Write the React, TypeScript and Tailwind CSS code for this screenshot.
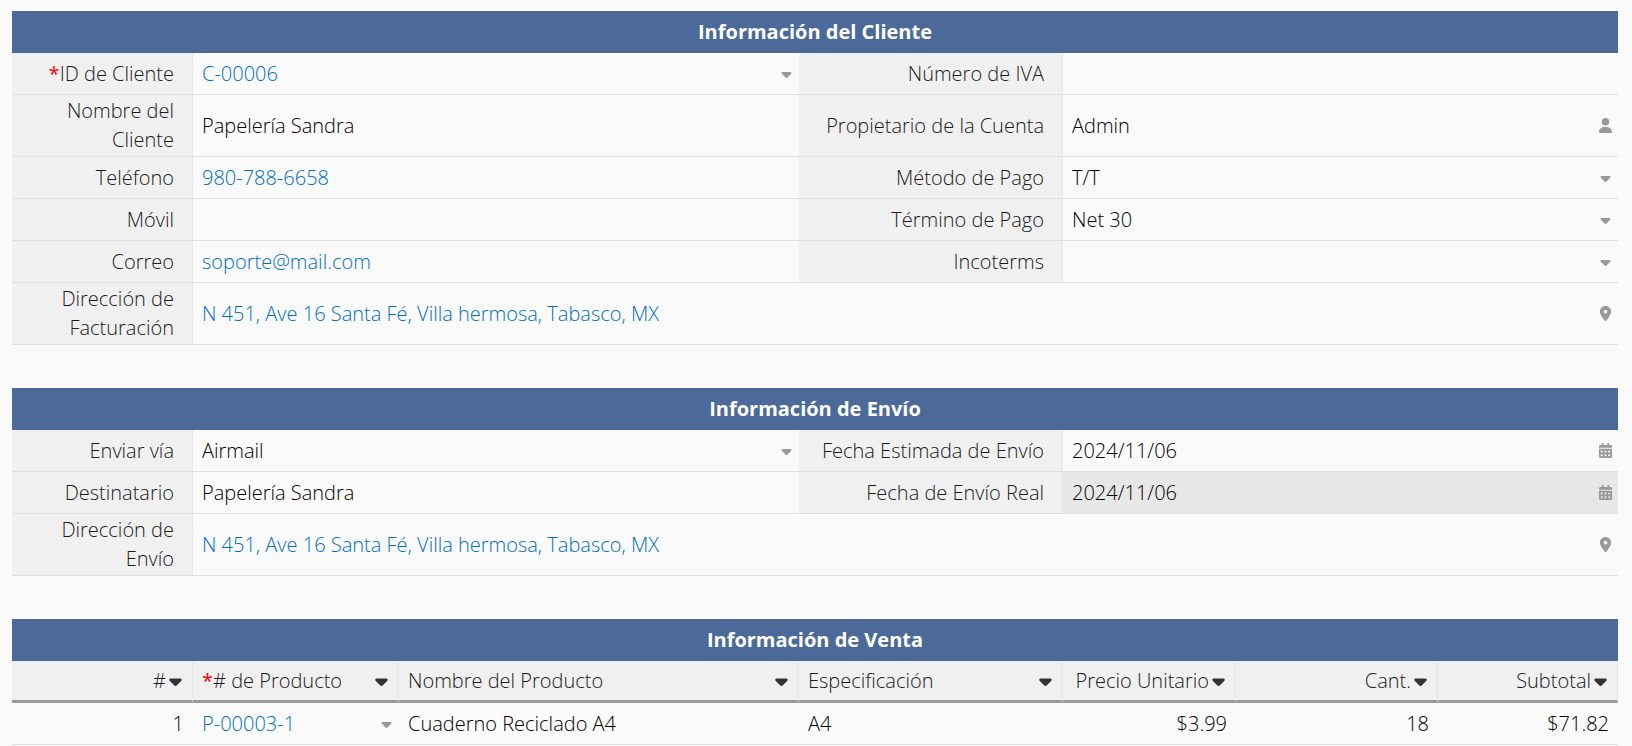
import type { ReactNode } from "react";
import { FaCalendarDays, FaCaretDown, FaLocationDot, FaUser } from "react-icons/fa6";

const ADDRESS = "N 451, Ave 16 Santa Fé, Villa hermosa, Tabasco, MX";

const controlClass = "h-full w-full min-w-0 appearance-none bg-transparent pl-[9px] pr-7 outline-none";

function SectionTitle({ children }: { children: ReactNode }) {
  return (
    <h2 className="flex h-[42px] items-center justify-center bg-[#4b6a99] pb-[2px] font-bold text-white">{children}</h2>
  );
}

function Row({ children, wide = false }: { children: ReactNode; wide?: boolean }) {
  return (
    <div
      className={`grid border-b border-[#dfdfdf] ${
        wide ? "grid-cols-[181fr_1425fr]" : "grid-cols-[181fr_606fr_264fr_555fr]"
      }`}
    >
      {children}
    </div>
  );
}

function Label({ id, required, children }: { id: string; required?: boolean; children: ReactNode }) {
  return (
    <label
      htmlFor={id}
      className="flex min-h-[41px] items-center justify-end border-r border-[#e7e7e7] bg-[#f0f0f0] pt-px pr-[18px] pb-[2px] pl-4 text-right text-[#1a1a1a]"
    >
      <span>
        {required && <span className="font-normal text-[#f00]">*</span>}
        {children}
      </span>
    </label>
  );
}

function TextField({ id, value = "" }: { id: string; value?: string }) {
  return <input id={id} type="text" defaultValue={value} className={controlClass} />;
}

function SelectField({ id, value = "", link, label }: { id: string; value?: string; link?: boolean; label?: string }) {
  return (
    <div className="relative h-full">
      <select id={id} aria-label={label} className={`${controlClass} ${link ? "text-[#006fc4]" : ""}`}>
        <option>{value}</option>
      </select>
      <span className="pointer-events-none absolute inset-y-0 right-[5px] flex w-[15px] items-center justify-center text-[#999]">
        <FaCaretDown size={16} />
      </span>
    </div>
  );
}

function LinkField({ id, href, children }: { id: string; href: string; children: ReactNode }) {
  return (
    <div className="flex items-center pl-[9px]">
      <a id={id} href={href} className="text-[#006fc4]">
        {children}
      </a>
    </div>
  );
}

// Campo con un botón de ayuda (usuario, calendario, mapa) a la derecha
function IconField({ icon, title, muted, children }: { icon: ReactNode; title: string; muted?: boolean; children: ReactNode }) {
  return (
    <div className={`flex items-center justify-between pr-[5px] ${muted ? "bg-[#e7e7e7]" : ""}`}>
      {children}
      <button type="button" aria-label={title} className="flex w-[15px] shrink-0 justify-center text-[#999]">
        {icon}
      </button>
    </div>
  );
}

const columns = [
  { name: "#", width: "w-[181px]", align: "right" },
  { name: "# de Producto", width: "w-[206px]", align: "left", required: true },
  { name: "Nombre del Producto", width: "w-[400px]", align: "left" },
  { name: "Especificación", width: "w-[264px]", align: "left" },
  { name: "Precio Unitario", width: "w-[173px]", align: "right" },
  { name: "Cant.", width: "w-[202px]", align: "right" },
  { name: "Subtotal", width: "w-[180px]", align: "right" },
];

export default function App() {
  return (
    <main className="flex min-h-screen flex-col gap-[43px] bg-[#fafafa] pt-[11px] pr-[14px] pl-3 font-['Open_Sans',sans-serif] text-[20px] leading-[29px] font-light text-black">
      <section>
        <SectionTitle>Información del Cliente</SectionTitle>
        <Row>
          <Label id="cliente" required>ID de Cliente</Label>
          <SelectField id="cliente" value="C-00006" link />
          <Label id="iva">Número de IVA</Label>
          <TextField id="iva" />
        </Row>
        <Row>
          <Label id="nombre">Nombre del Cliente</Label>
          <TextField id="nombre" value="Papelería Sandra" />
          <Label id="propietario">Propietario de la Cuenta</Label>
          <IconField icon={<FaUser size={15} />} title="Elegir usuario">
            <TextField id="propietario" value="Admin" />
          </IconField>
        </Row>
        <Row>
          <Label id="telefono">Teléfono</Label>
          <LinkField id="telefono" href="tel:9807886658">980-788-6658</LinkField>
          <Label id="metodo">Método de Pago</Label>
          <SelectField id="metodo" value="T/T" />
        </Row>
        <Row>
          <Label id="movil">Móvil</Label>
          <TextField id="movil" />
          <Label id="termino">Término de Pago</Label>
          <SelectField id="termino" value="Net 30" />
        </Row>
        <Row>
          <Label id="correo">Correo</Label>
          <LinkField id="correo" href="mailto:soporte@mail.com">soporte@mail.com</LinkField>
          <Label id="incoterms">Incoterms</Label>
          <SelectField id="incoterms" />
        </Row>
        <Row wide>
          <Label id="facturacion">Dirección de Facturación</Label>
          <IconField icon={<FaLocationDot size={15} />} title="Ver mapa">
            <LinkField id="facturacion" href="#mapa">{ADDRESS}</LinkField>
          </IconField>
        </Row>
      </section>

      <section>
        <SectionTitle>Información de Envío</SectionTitle>
        <Row>
          <Label id="via">Enviar vía</Label>
          <SelectField id="via" value="Airmail" />
          <Label id="estimada">Fecha Estimada de Envío</Label>
          <IconField icon={<FaCalendarDays size={15} />} title="Elegir fecha">
            <TextField id="estimada" value="2024/11/06" />
          </IconField>
        </Row>
        <Row>
          <Label id="destinatario">Destinatario</Label>
          <TextField id="destinatario" value="Papelería Sandra" />
          <Label id="real">Fecha de Envío Real</Label>
          <IconField icon={<FaCalendarDays size={15} />} title="Elegir fecha" muted>
            <TextField id="real" value="2024/11/06" />
          </IconField>
        </Row>
        <Row wide>
          <Label id="envio">Dirección de Envío</Label>
          <IconField icon={<FaLocationDot size={15} />} title="Ver mapa">
            <LinkField id="envio" href="#mapa">{ADDRESS}</LinkField>
          </IconField>
        </Row>
      </section>

      <section>
        <SectionTitle>Información de Venta</SectionTitle>
        <table className="w-full table-fixed border-separate border-spacing-0">
          <colgroup>
            {columns.map((c) => (
              <col key={c.name} className={c.width} />
            ))}
          </colgroup>
          <thead>
            <tr className="h-[42px] bg-[#f0f0f0] text-[#1a1a1a]">
              {columns.map((c) => (
                <th key={c.name} className="border-r border-b-3 border-r-[#e4e4e4] border-b-[#999] p-0 font-light">
                  <div className={`flex items-center pr-[10px] pl-[9px] ${c.align === "right" ? "justify-end gap-[3px]" : "justify-between"}`}>
                    <span className="whitespace-nowrap">
                      {c.required && <span className="font-normal text-[#f00]">*</span>}
                      {c.name}
                    </span>
                    <button type="button" aria-label={`Ordenar por ${c.name}`} className="text-[#333]">
                      <FaCaretDown size={20} className="w-[13px]" />
                    </button>
                  </div>
                </th>
              ))}
            </tr>
          </thead>
          <tbody>
            <tr className="h-[42px] *:border-b *:border-[#dfdfdf] *:py-0">
              <td className="pr-[9px] text-right">1</td>
              <td className="h-[41px] p-0">
                <SelectField id="producto" label="# de Producto" value="P-00003-1" link />
              </td>
              <td className="pl-[9px]">Cuaderno Reciclado A4</td>
              <td className="pl-[9px]">A4</td>
              <td className="pr-[9px] text-right">$3.99</td>
              <td className="pr-[9px] text-right">18</td>
              <td className="pr-[9px] text-right">$71.82</td>
            </tr>
          </tbody>
        </table>
      </section>
    </main>
  );
}
